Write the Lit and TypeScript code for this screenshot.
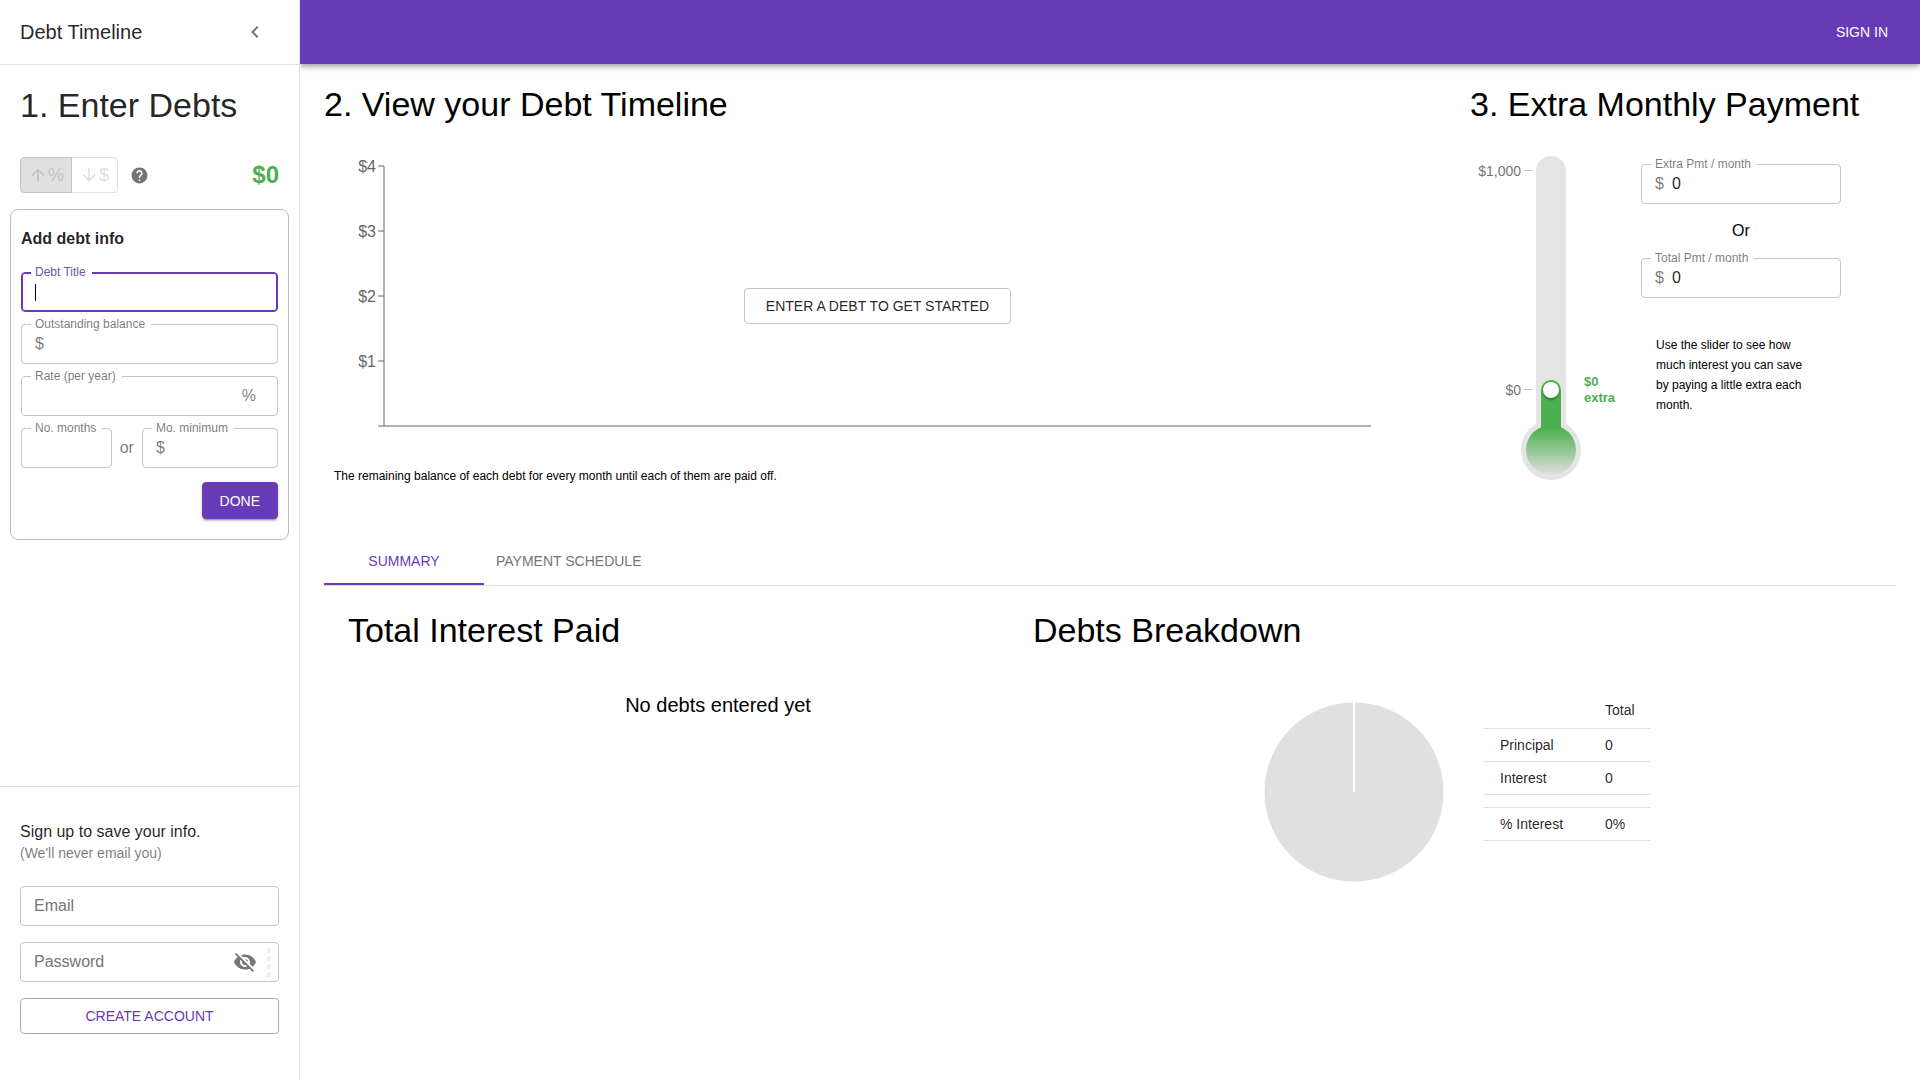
import { LitElement, html, svg, css, nothing } from "lit";
import { customElement, property, state } from "lit/decorators.js";
import { classMap } from "lit/directives/class-map.js";

const PATHS = {
  chevronLeft: "M15.41 7.41L14 6l-6 6 6 6 1.41-1.41L10.83 12z",
  arrowUp: "M4 12l1.41 1.41L11 7.83V20h2V7.83l5.58 5.59L20 12l-8-8-8 8z",
  arrowDown: "M20 12l-1.41-1.41L13 16.17V4h-2v12.17l-5.58-5.59L4 12l8 8 8-8z",
  help: "M12 2C6.48 2 2 6.48 2 12s4.48 10 10 10 10-4.48 10-10S17.52 2 12 2zm1 17h-2v-2h2v2zm2.07-7.75l-.9.92C13.45 12.9 13 13.5 13 15h-2v-.5c0-1.1.45-2.1 1.17-2.83l1.24-1.26c.37-.36.59-.86.59-1.41 0-1.1-.9-2-2-2s-2 .9-2 2H8c0-2.21 1.79-4 4-4s4 1.79 4 4c0 .88-.36 1.68-.93 2.25z",
  visibilityOff:
    "M12 7c2.76 0 5 2.24 5 5 0 .65-.13 1.26-.36 1.83l2.92 2.92c1.51-1.26 2.7-2.89 3.43-4.75-1.73-4.39-6-7.5-11-7.5-1.4 0-2.74.25-3.98.7l2.16 2.16C10.74 7.13 11.35 7 12 7zM2 4.27l2.28 2.28.46.46C3.08 8.3 1.78 10.02 1 12c1.73 4.39 6 7.5 11 7.5 1.55 0 3.03-.3 4.38-.84l.42.42L19.73 22 21 20.73 3.27 3 2 4.27zM7.53 9.8l1.55 1.55c-.05.21-.08.43-.08.65 0 1.66 1.34 3 3 3 .22 0 .44-.03.65-.08l1.55 1.55c-.67.33-1.41.53-2.2.53-2.76 0-5-2.24-5-5 0-.79.2-1.53.53-2.2zm4.31-.78l3.15 3.15.02-.16c0-1.66-1.34-3-3-3l-.17.01z",
};

const icon = (path: string, size = 24) => html`
  <svg width=${size} height=${size} viewBox="0 0 24 24" fill="currentColor" aria-hidden="true">
    <path d=${path}></path>
  </svg>
`;

const reset = css`
  *,
  *::before,
  *::after {
    box-sizing: border-box;
  }
  h1, h2, h3, p {
    margin: 0;
    font-weight: 400;
  }
  button, input {
    margin: 0;
    font-family: inherit;
  }
  svg {
    display: block;
    flex: none;
  }
  .heading {
    font-size: 34px;
    line-height: 42px;
  }
  .btn {
    height: 36px;
    padding: 0 17px;
    border: 1px solid #c4c4c4;
    border-radius: 4px;
    background: #fff;
    color: rgba(0, 0, 0, 0.87);
    font-size: 14px;
    line-height: 24px;
    text-transform: uppercase;
    white-space: nowrap;
    cursor: pointer;
  }
`;

/** Outlined text box with an optional floating label and money or percent marks. */
@customElement("outlined-field")
export class OutlinedField extends LitElement {
  @property() label = "";
  @property() placeholder = "";
  @property() prefixText = "";
  @property() suffixText = "";
  @property() value = "";
  @property() type = "text";
  @property({ type: Boolean }) active = false;
  @property({ type: Boolean }) reveal = false;

  static styles = [
    reset,
    css`
      :host {
        display: block;
        min-width: 0;
      }
      .field {
        position: relative;
        display: flex;
        align-items: center;
        height: 40px;
        padding: 0 13px;
        border: 1px solid #c4c4c4;
        border-radius: 4px;
        color: rgba(0, 0, 0, 0.54);
        font-size: 16px;
        line-height: 20px;
      }
      .active {
        border-color: #673ab7;
        box-shadow: inset 0 0 0 1px #673ab7;
      }
      .with-reveal {
        padding-right: 7px;
      }
      .label {
        position: absolute;
        top: -7px;
        left: 9px;
        padding: 0 6px 0 4px;
        background: #fff;
        font-size: 12px;
        line-height: 12px;
        white-space: nowrap;
      }
      .active .label {
        color: #7254a4;
      }
      .input {
        flex: 1;
        width: 0;
        min-width: 0;
        padding: 0;
        border: 0;
        outline: 0;
        background: none;
        color: rgba(0, 0, 0, 0.87);
        font-size: 16px;
        line-height: 20px;
      }
      .input::placeholder {
        color: #757575;
        opacity: 1;
      }
      .active .input {
        caret-color: transparent;
      }
      .caret {
        width: 1px;
        height: 17px;
        background: #000;
      }
      .prefix {
        padding-right: 8px;
      }
      .suffix {
        padding-right: 8px;
      }
      .reveal {
        display: flex;
        padding: 0;
        border: 0;
        background: none;
        color: #757575;
        cursor: pointer;
      }
      .strength {
        display: grid;
        gap: 3px;
        margin-left: 10px;
      }
      .dot {
        width: 4px;
        height: 5px;
        background: #eee;
      }
    `,
  ];

  render() {
    return html`
      <div class=${classMap({ field: true, active: this.active, "with-reveal": this.reveal })}>
        ${this.label ? html`<label class="label" for="box">${this.label}</label>` : nothing}
        ${this.prefixText ? html`<span class="prefix">${this.prefixText}</span>` : nothing}
        ${this.active ? html`<span class="caret"></span>` : nothing}
        <input
          id="box"
          class="input"
          type=${this.type}
          .value=${this.value}
          placeholder=${this.placeholder}
          aria-label=${this.label || this.placeholder}
        />
        ${this.suffixText ? html`<span class="suffix">${this.suffixText}</span>` : nothing}
        ${this.reveal
          ? html`
              <button class="reveal" type="button" aria-label="Show password">
                ${icon(PATHS.visibilityOff)}
              </button>
              <span class="strength">${[0, 1, 2, 3].map(() => html`<span class="dot"></span>`)}</span>
            `
          : nothing}
      </div>
    `;
  }
}

@customElement("debt-sidebar")
export class DebtSidebar extends LitElement {
  static styles = [
    reset,
    css`
      :host {
        position: relative;
        z-index: 2;
        display: flex;
        flex-direction: column;
        flex: 0 0 300px;
        min-height: 100vh;
        border-right: 1px solid #e0e0e0;
        box-sizing: border-box;
        background: #fff;
        color: rgba(0, 0, 0, 0.87);
      }
      .brand {
        display: flex;
        align-items: center;
        justify-content: space-between;
        height: 65px;
        padding: 0 32px 0 20px;
        border-bottom: 1px solid #e0e0e0;
      }
      .title {
        font-size: 20px;
        line-height: 32px;
      }
      .plain {
        display: flex;
        padding: 0;
        border: 0;
        background: none;
        color: #757575;
        cursor: pointer;
      }
      .intro {
        padding: 19px 20px 0;
      }
      .tools {
        display: flex;
        align-items: center;
        height: 36px;
        margin: 31px 20px 16px;
      }
      .toggle {
        display: flex;
        align-items: center;
        height: 36px;
        padding: 0 7px;
        border: 1px solid #e0e0e0;
        border-radius: 4px;
        background: #fff;
        color: #e0e0e0;
        font-size: 18px;
        line-height: 20px;
      }
      .toggle-on {
        z-index: 1;
        border-color: #c4c4c4;
        border-radius: 4px 0 0 4px;
        background: #e0e0e0;
        color: #c4c4c4;
      }
      .toggle-off {
        margin-left: -1px;
        padding-right: 8px;
        border-radius: 0 4px 4px 0;
      }
      .help {
        margin-left: 12px;
      }
      .sum {
        margin-left: auto;
        color: #4caf50;
        font-size: 24px;
        font-weight: 700;
        line-height: 32px;
      }
      .card {
        display: grid;
        gap: 12px;
        margin: 0 10px;
        padding: 17px 10px 20px;
        border: 1px solid #bdbdbd;
        border-radius: 8px;
      }
      .card-title {
        padding-bottom: 9px;
        font-size: 16px;
        font-weight: 700;
        line-height: 24px;
      }
      .pair {
        display: grid;
        grid-template-columns: 2fr auto 3fr;
        align-items: center;
        gap: 8px;
        color: rgba(0, 0, 0, 0.54);
        font-size: 16px;
      }
      .done {
        justify-self: end;
        height: 37px;
        margin-top: 2px;
        border-color: #673ab7;
        background: #673ab7;
        color: #fff;
        box-shadow: 0 3px 1px -2px rgba(0, 0, 0, 0.2), 0 2px 2px 0 rgba(0, 0, 0, 0.14),
          0 1px 5px 0 rgba(0, 0, 0, 0.12);
      }
      .signup {
        display: grid;
        gap: 16px;
        margin-top: auto;
        padding: 33px 20px 46px;
        border-top: 1px solid #e0e0e0;
      }
      .pitch {
        padding-bottom: 8px;
        font-size: 16px;
        line-height: 24px;
      }
      .note {
        color: rgba(0, 0, 0, 0.54);
        font-size: 14px;
        line-height: 18px;
      }
      .create {
        border-color: #b39ddb;
        color: #673ab7;
      }
    `,
  ];

  render() {
    return html`
      <div class="brand">
        <h1 class="title">Debt Timeline</h1>
        <button class="plain" type="button" aria-label="Collapse sidebar">
          ${icon(PATHS.chevronLeft)}
        </button>
      </div>
      <div class="intro"><h2 class="heading">1. Enter Debts</h2></div>
      <div class="tools">
        <button class="toggle toggle-on" type="button" disabled>${icon(PATHS.arrowUp, 20)}<span>%</span></button>
        <button class="toggle toggle-off" type="button" disabled>${icon(PATHS.arrowDown, 20)}<span>$</span></button>
        <button class="plain help" type="button" aria-label="Help">${icon(PATHS.help, 19)}</button>
        <span class="sum">$0</span>
      </div>
      <form class="card">
        <h3 class="card-title">Add debt info</h3>
        <outlined-field label="Debt Title" active></outlined-field>
        <outlined-field label="Outstanding balance" prefixText="$"></outlined-field>
        <outlined-field label="Rate (per year)" suffixText="%"></outlined-field>
        <div class="pair">
          <outlined-field label="No. months"></outlined-field>
          <span>or</span>
          <outlined-field label="Mo. minimum" prefixText="$"></outlined-field>
        </div>
        <button class="btn done" type="button">Done</button>
      </form>
      <form class="signup">
        <div class="pitch">
          <p>Sign up to save your info.</p>
          <p class="note">(We'll never email you)</p>
        </div>
        <outlined-field type="email" placeholder="Email"></outlined-field>
        <outlined-field type="password" placeholder="Password" reveal></outlined-field>
        <button class="btn create" type="button">Create account</button>
      </form>
    `;
  }
}

@customElement("balance-chart")
export class BalanceChart extends LitElement {
  static styles = [
    reset,
    css`
      :host {
        display: grid;
      }
      .plot {
        grid-area: 1 / 1;
        width: 100%;
        overflow: visible;
        stroke: #666;
      }
      .tick {
        fill: #666;
        stroke: none;
        font-size: 16px;
        text-anchor: end;
      }
      .overlay {
        grid-area: 1 / 1;
        place-self: center;
        padding-left: 60px;
      }
      .start {
        padding: 0 21px;
      }
    `,
  ];

  render() {
    const step = 65;
    const bottom = 270;
    return html`
      <svg class="plot" height="300" role="img" aria-label="Remaining balance by month">
        ${[4, 3, 2, 1, 0].map((n) => {
          const y = bottom - n * step;
          return svg`
            <line x1="54" x2="60" y1=${y} y2=${y}></line>
            ${n ? svg`<text class="tick" x="52" y=${y + 6}>$${n}</text>` : nothing}
          `;
        })}
        <line x1="60" x2="60" y1="10" y2=${bottom}></line>
        <line x1="60" x2="100%" y1=${bottom} y2=${bottom}></line>
      </svg>
      <div class="overlay">
        <button class="btn start" type="button">Enter a debt to get started</button>
      </div>
    `;
  }
}

@customElement("payment-thermometer")
export class PaymentThermometer extends LitElement {
  @state() private amount = 0;

  static styles = [
    reset,
    css`
      :host {
        position: relative;
        display: block;
      }
      .mark {
        fill: #757575;
        font-size: 14px;
        text-anchor: end;
      }
      .mark-line {
        stroke: #bdbdbd;
      }
      .extra {
        fill: #4caf50;
        font-size: 13px;
        font-weight: 700;
      }
      .slider {
        position: absolute;
        top: 6px;
        left: 73px;
        width: 16px;
        height: 236px;
        appearance: none;
        background: none;
        writing-mode: vertical-lr;
        direction: rtl;
        cursor: pointer;
      }
      .slider::-webkit-slider-thumb {
        appearance: none;
        width: 16px;
        height: 16px;
        border-radius: 50%;
        background: #fff;
        box-shadow: 0 2px 2px rgba(0, 0, 0, 0.3);
      }
    `,
  ];

  private onInput(e: Event) {
    this.amount = Number((e.target as HTMLInputElement).value);
  }

  render() {
    const top = 224 - this.amount * 0.22;
    return html`
      <svg width="171" height="324" aria-hidden="true">
        <defs>
          <linearGradient id="mercury" gradientUnits="userSpaceOnUse" x1="0" x2="0" y1="272" y2="319">
            <stop offset="0" stop-color="#4caf50"></stop>
            <stop offset="1" stop-color="#e0e0e0"></stop>
          </linearGradient>
        </defs>
        <text class="mark" x="51" y="20">$1,000</text>
        <line class="mark-line" x1="54" x2="62" y1="14.5" y2="14.5"></line>
        <text class="mark" x="51" y="239">$0</text>
        <line class="mark-line" x1="54" x2="62" y1="233.5" y2="233.5"></line>
        <g fill="#e4e4e4">
          <rect x="66" y="0" width="30" height="300" rx="15"></rect>
          <circle cx="81" cy="294" r="30"></circle>
        </g>
        <g fill="url(#mercury)">
          <circle cx="81" cy="294" r="25"></circle>
          <path d="M71 275V${top + 10}a10 10 0 0 1 20 0V275z"></path>
        </g>
        <text class="extra" x="114" y="230">$${this.amount}</text>
        <text class="extra" x="114" y="246">extra</text>
      </svg>
      <input
        class="slider"
        type="range"
        min="0"
        max="1000"
        .value=${String(this.amount)}
        aria-label="Extra monthly payment"
        @input=${this.onInput}
      />
    `;
  }
}

@customElement("debt-summary")
export class DebtSummary extends LitElement {
  static styles = [
    reset,
    css`
      :host {
        display: grid;
        grid-template-columns: 685fr 839fr;
        padding: 23px 24px;
      }
      .empty {
        padding: 40px 0 0 55px;
        font-size: 20px;
        line-height: 28px;
        text-align: center;
      }
      .breakdown {
        display: flex;
        justify-content: center;
        align-items: flex-start;
        gap: 30px;
        padding-top: 40px;
      }
      .table {
        border-collapse: collapse;
        color: rgba(0, 0, 0, 0.87);
        font-size: 14px;
        line-height: 20px;
        text-align: left;
      }
      .cell {
        min-width: 62px;
        height: 33px;
        padding: 0 16px;
        border-bottom: 1px solid #e0e0e0;
        font-weight: 400;
      }
      .name {
        min-width: 105px;
        padding-right: 24px;
      }
      .head .cell {
        height: 37px;
        padding-top: 2px;
      }
      .spacer .cell {
        height: 13px;
      }
    `,
  ];

  render() {
    const rows: [string, string][] = [
      ["Principal", "0"],
      ["Interest", "0"],
      ["", ""],
      ["% Interest", "0%"],
    ];
    return html`
      <section>
        <h2 class="heading">Total Interest Paid</h2>
        <p class="empty">No debts entered yet</p>
      </section>
      <section>
        <h2 class="heading">Debts Breakdown</h2>
        <div class="breakdown">
          <svg width="200" height="200" role="img" aria-label="No debts to break down">
            <circle cx="100" cy="101" r="90" fill="#e0e0e0" stroke="#fff"></circle>
            <line x1="100" x2="100" y1="11" y2="101" stroke="#fff" stroke-width="2"></line>
          </svg>
          <table class="table">
            <thead>
              <tr class="head">
                <td class="cell name"></td>
                <th class="cell" scope="col">Total</th>
              </tr>
            </thead>
            <tbody>
              ${rows.map(
                ([name, value]) => html`
                  <tr class=${name ? "row" : "spacer"}>
                    <td class="cell name">${name}</td>
                    <td class="cell">${value}</td>
                  </tr>
                `
              )}
            </tbody>
          </table>
        </div>
      </section>
    `;
  }
}

@customElement("app-root")
export class AppRoot extends LitElement {
  static styles = [
    reset,
    css`
      :host {
        display: flex;
        min-height: 100vh;
        background: #fff;
        color: #000;
        font-family: "Liberation Sans", Arial, sans-serif;
      }
      .page {
        flex: 1;
        min-width: 0;
      }
      .bar {
        display: flex;
        align-items: center;
        justify-content: flex-end;
        height: 64px;
        padding: 0 32px;
        background: #673ab7;
        box-shadow: 0 2px 4px -1px rgba(0, 0, 0, 0.2), 0 4px 5px 0 rgba(0, 0, 0, 0.14),
          0 1px 10px 0 rgba(0, 0, 0, 0.12);
      }
      .sign-in {
        padding: 0;
        border: 0;
        background: none;
        color: #fff;
      }
      .content {
        padding: 19px 24px;
      }
      .top {
        display: grid;
        grid-template-columns: minmax(0, 1fr) 426px;
        gap: 99px;
      }
      .block {
        display: grid;
        align-content: start;
        gap: 31px;
      }
      .caption {
        font-size: 12px;
        line-height: 20px;
      }
      .chart-note {
        padding: 10px 10px 0;
      }
      .payment {
        display: flex;
      }
      .amounts {
        width: 200px;
        padding-top: 8px;
      }
      .or {
        padding: 15px 0;
        font-size: 16px;
        line-height: 24px;
        text-align: center;
      }
      .hint {
        width: 170px;
        padding: 37px 0 0 15px;
      }
      .tabs {
        display: flex;
        margin-top: 51px;
        border-bottom: 1px solid #e0e0e0;
      }
      .tab {
        height: 48px;
        min-width: 160px;
        padding: 0 12px;
        border: 0;
        border-bottom: 2px solid transparent;
        border-top: 2px solid transparent;
        background: none;
        color: #757575;
        font-size: 14px;
        text-transform: uppercase;
        cursor: pointer;
      }
      .tab-on {
        border-bottom-color: #673ab7;
        color: #673ab7;
      }
    `,
  ];

  render() {
    return html`
      <debt-sidebar></debt-sidebar>
      <div class="page">
        <header class="bar">
          <button class="btn sign-in" type="button">Sign in</button>
        </header>
        <main class="content">
          <div class="top">
            <section class="block">
              <h2 class="heading">2. View your Debt Timeline</h2>
              <div>
                <balance-chart></balance-chart>
                <p class="caption chart-note">
                  The remaining balance of each debt for every month until each of them are paid off.
                </p>
              </div>
            </section>
            <section class="block">
              <h2 class="heading">3. Extra Monthly Payment</h2>
              <div class="payment">
                <payment-thermometer></payment-thermometer>
                <div class="amounts">
                  <outlined-field label="Extra Pmt / month" prefixText="$" value="0"></outlined-field>
                  <p class="or">Or</p>
                  <outlined-field label="Total Pmt / month" prefixText="$" value="0"></outlined-field>
                  <p class="caption hint">
                    Use the slider to see how much interest you can save by paying a little extra each month.
                  </p>
                </div>
              </div>
            </section>
          </div>
          <div class="tabs" role="tablist">
            <button class="tab tab-on" type="button" role="tab" aria-selected="true">Summary</button>
            <button class="tab" type="button" role="tab" aria-selected="false">Payment schedule</button>
          </div>
          <debt-summary></debt-summary>
        </main>
      </div>
    `;
  }
}
